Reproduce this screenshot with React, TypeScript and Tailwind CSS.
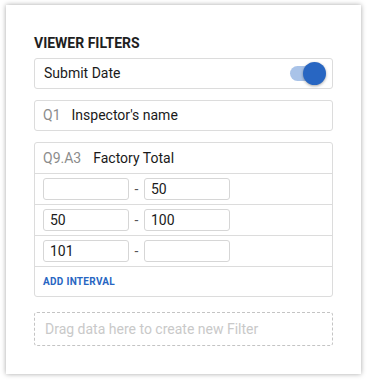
const font = { fontFamily: "Roboto, 'Noto Sans', sans-serif" };

const RangeRow = ({ from, to }: { from: string; to: string }) => (
  <div className="h-[31px] border-t border-[#dcdcdc] flex items-center pl-[8px]">
    <div className="w-[86px] h-[22px] border border-[#d6d6d6] rounded-[3px] flex items-center px-[6px] text-[14px] text-[#1a1a1a]">
      {from}
    </div>
    <div className="w-[15px] text-center text-[14px] text-[#555] leading-none">-</div>
    <div className="w-[86px] h-[22px] border border-[#d6d6d6] rounded-[3px] flex items-center px-[6px] text-[14px] text-[#1a1a1a]">
      {to}
    </div>
  </div>
);

export default function App() {
  return (
    <div className="w-[367px] h-[380px] bg-white pt-[5px] pl-[6px]" style={font}>
      <div className="w-[355px] h-[369px] bg-white shadow-[0_0_5px_rgba(0,0,0,0.35)] px-[28px] pt-[30px]">
        <div className="text-[14px] leading-4 font-bold text-[#1e1e1e]">VIEWER FILTERS</div>

        {/* Submit Date */}
        <div className="mt-[7px] h-[31px] border border-[#dcdcdc] rounded-[3px] flex items-center justify-between pl-[9px] pr-[6px]">
          <span className="text-[14px] text-[#1a1a1a]">Submit Date</span>
          <div className="relative w-[36px] h-[23px] flex items-center">
            <div className="w-[33px] h-[15px] rounded-full bg-[#a9c3e8]" />
            <div className="absolute right-0 top-0 w-[23px] h-[23px] rounded-full bg-[#2866c2] shadow-[0_1px_3px_rgba(0,0,0,0.35)]" />
          </div>
        </div>

        {/* Q1 */}
        <div className="mt-[11px] h-[31px] border border-[#dcdcdc] rounded-[3px] flex items-center pl-[8px]">
          <span className="text-[14px] text-[#8c8c8c] mr-[11px]">Q1</span>
          <span className="text-[14px] text-[#1a1a1a]">Inspector's name</span>
        </div>

        {/* Q9.A3 */}
        <div className="mt-[11px] border border-[#dcdcdc] rounded-[3px]">
          <div className="h-[30px] flex items-center pl-[8px]">
            <span className="text-[14px] text-[#8c8c8c] mr-[12px]">Q9.A3</span>
            <span className="text-[14px] text-[#1a1a1a]">Factory Total</span>
          </div>
          <RangeRow from="" to="50" />
          <RangeRow from="50" to="100" />
          <RangeRow from="101" to="" />
          <div className="h-[30px] border-t border-[#dcdcdc] flex items-center pl-[8px]">
            <span className="text-[10px] font-bold tracking-[0.3px] text-[#2866c2]">ADD INTERVAL</span>
          </div>
        </div>

        {/* Drop zone */}
        <div className="mt-[15px] h-[34px] border border-dashed border-[#c4c4c4] rounded-[3px] flex items-center pl-[10px]">
          <span className="text-[14px] text-[#c9c9c9]">Drag data here to create new Filter</span>
        </div>
      </div>
    </div>
  );
}
